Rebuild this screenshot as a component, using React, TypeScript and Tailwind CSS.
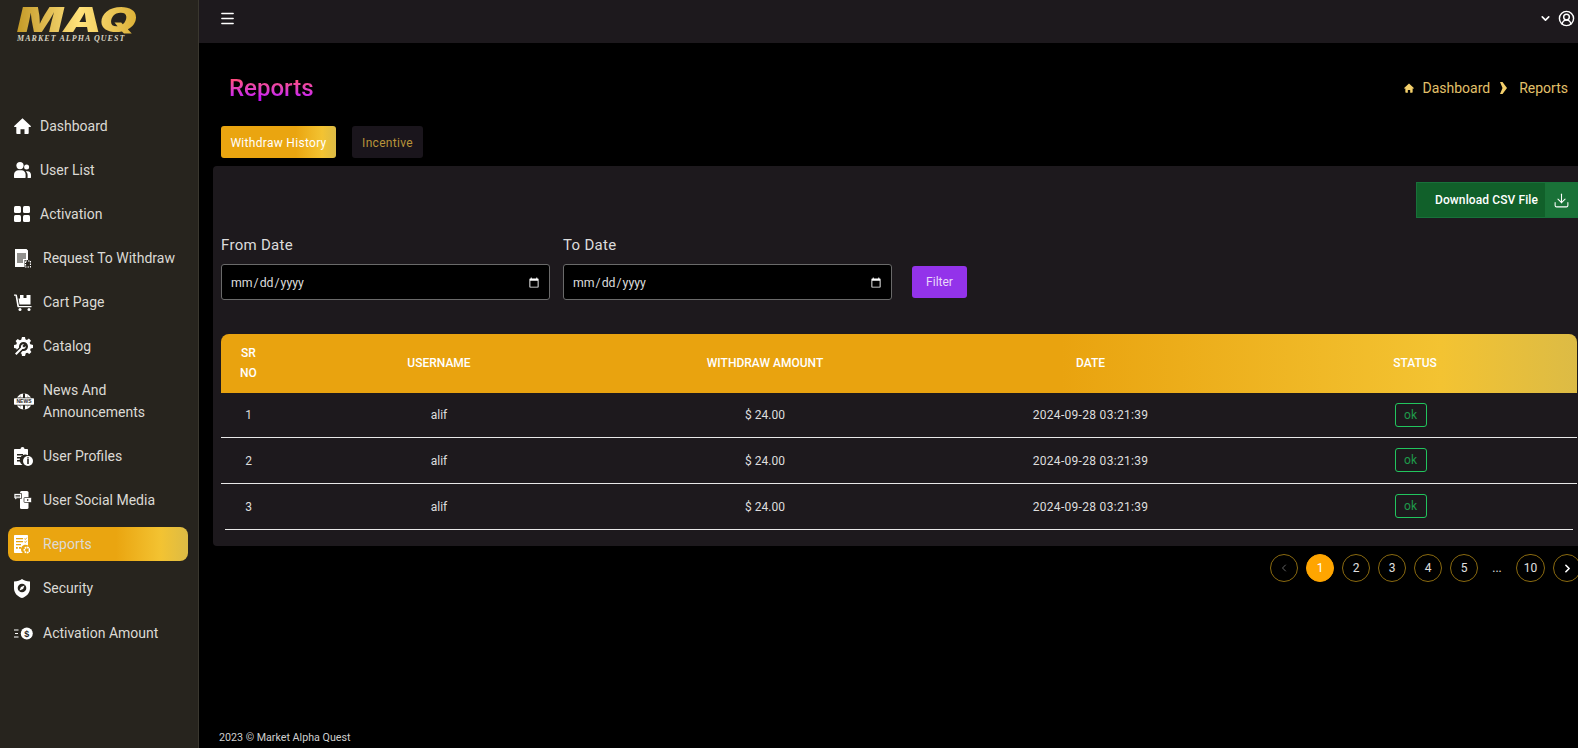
import type { ReactNode } from 'react'
import { ChevronDown, ChevronLeft, ChevronRight, CircleUserRound, Download, Menu } from 'lucide-react'

type IconProps = { className?: string }

const HomeIcon = ({ className = 'w-[17px] h-[16px]' }: IconProps) => (
  <svg viewBox="0 0 17 16" className={className} fill="currentColor">
    <path d="M8.5 0.3 0.2 7.9c-.4.4-.1 1 .4 1h1.700v6.100c0 .5.4 1 1 1h3.200v-4.800h4v4.800h3.200c.6 0 1-.5 1-1V8.900h1.700c.5 0 .8-.6.4-1z" />
  </svg>
)

const UsersIcon = () => (
  <svg viewBox="0 0 17 16" className="w-[17px] h-[16px]" fill="currentColor">
    <circle cx="6" cy="3.600" r="3.600" />
    <path d="M0 15.500v-3c0-2.600 2.200-4.200 4.400-4.200h3.200c2.200 0 4 1.600 4 4.200v3c0 .3-.2.500-.5.500H.5c-.3 0-.5-.2-.5-.5z" />
    <circle cx="12.600" cy="5" r="2.500" />
    <path d="M12.900 16h3.600c.3 0 .5-.2.500-.5v-2.700c0-2-1.500-3.600-3.400-3.600h-1.300c-.3 0-.5.300-.2.500 1 .9 1.500 2.100 1.500 3.500v2.200c0 .2-.1.400-.2.600z" />
  </svg>
)

const GridIcon = () => (
  <svg viewBox="0 0 16 16" className="w-[16px] h-[16px]" fill="currentColor">
    <rect width="7" height="7" rx="1.500" />
    <rect x="9" width="7" height="7" rx="1.500" />
    <rect y="9" width="7" height="7" rx="1.500" />
    <rect x="9" y="9" width="7" height="7" rx="1.500" />
  </svg>
)

const RequestIcon = () => (
  <svg viewBox="0 0 17 19" className="w-[17px] h-[19px]" fill="currentColor">
    <path d="M1 0h11.500L14 1.500V11h-3.500v7H1z" />
    <path d="M3 4.500h9v1H3zM3 6.500h9v1H3zM3 8.500h9v1H3zM3 10.500h6v1H3zM3 12.500h6v1H3z" fill="#27241e" />
    <rect x="11.500" y="12" width="5" height="6" fill="none" stroke="currentColor" strokeWidth="1.200" strokeDasharray="1.500 1" />
  </svg>
)

const CartIcon = () => (
  <svg viewBox="0 0 18 17" className="w-[18px] h-[17px]" fill="currentColor">
    <path d="M0 .6h2.200c.4 0 .7.300.8.600L5 12h12.500v1.200H4c-.3 0-.5-.2-.6-.5L1.500 1.800H0z" />
    <path d="M6 1h10.500v9.500H5.500L4.500 4.500H6z" />
    <path d="M9.500 1h3v3h-3z" fill="#27241e" />
    <circle cx="6" cy="15.400" r="1.500" />
    <circle cx="15" cy="15.400" r="1.500" />
  </svg>
)

const CatalogIcon = () => (
  <svg viewBox="0 0 19 19" className="w-[19px] h-[19px]" fill="currentColor">
    <path d="M8 0h3l.4 2.300 1.500.6 2-1.300 2.100 2.100-1.300 2 .6 1.500L19 8v3l-2.300.4-.6 1.500 1.300 2-2.100 2.100-2-1.300-1.500.6L11 19H8l-.4-2.300-1-.4L8.500 14l1 .1c2.500 0 4.500-2 4.500-4.600s-2-4.500-4.500-4.500S5 7 5 9.500l.1 1L2.800 12.800 2.300 11.400 0 11V8l2.300-.4.600-1.500-1.300-2 2.100-2.100 2 1.300 1.500-.6z" />
    <path d="M1 16.500 7 10.500c-.6-1.800.9-3.700 3-3.300l-1.600 1.700 1.600 1.600 1.700-1.600c.4 2-1.500 3.500-3.300 3L2.500 18z" />
  </svg>
)

const NewsIcon = () => (
  <svg viewBox="0 0 20 17" className="w-[20px] h-[17px]" fill="currentColor">
    <path d="M3 4.500C4.500 2 7 .4 10 .4s5.500 1.600 7 4.100h-2.600a9 9 0 0 0-1.400-2.600 8 8 0 0 1 .9 2.600H11V.8h-2v3.700H6.100A8 8 0 0 1 7 1.900a9 9 0 0 0-1.400 2.600zM3 12.500h2.600A9 9 0 0 0 7 15.100a8 8 0 0 1-.9-2.600H9v3.700h2v-3.700h2.900a8 8 0 0 1-.9 2.600 9 9 0 0 0 1.400-2.600H17c-1.500 2.500-4 4.100-7 4.100s-5.500-1.600-7-4.100z" />
    <rect y="5.300" width="20" height="6.400" rx=".8" />
    <text x="10" y="10.200" textAnchor="middle" fontSize="5" fontWeight="700" fontFamily="Liberation Sans, sans-serif" fill="#27241e">NEWS</text>
  </svg>
)

const ProfilesIcon = () => (
  <svg viewBox="0 0 19 19" className="w-[19px] h-[19px]" fill="currentColor">
    <path d="M6.500 2a2 2 0 0 1 4 0H13c.6 0 1 .4 1 1v5.200a5.500 5.500 0 0 0-5.500 9.800H1c-.6 0-1-.4-1-1V3c0-.6.400-1 1-1z" />
    <path d="M3 7h6v1.500H3zM3 10h4v1.500H3zM3 13h3.500v1.500H3z" fill="#27241e" />
    <circle cx="14" cy="14" r="5" />
    <path d="M13.200 12h1.600v5h-1.600zM13.200 10.300h1.600v1.200h-1.600z" fill="#27241e" />
  </svg>
)

const SocialIcon = () => (
  <svg viewBox="0 0 18 18" className="w-[18px] h-[18px]" fill="currentColor">
    <rect x="6" y="0" width="8.500" height="18" rx="1.500" />
    <path d="M0 2.500h7.500v5H3L1 9V7.500H0z" stroke="#27241e" strokeWidth=".7" />
    <rect x="10" y="6.500" width="7.500" height="5" rx=".8" stroke="#27241e" strokeWidth=".7" />
    <path d="M1.500 4h4.500v.8H1.500zM1.500 5.500h4.500v.8H1.500z" fill="#27241e" />
    <path d="m13 8 2 1-2 1z" fill="#27241e" />
  </svg>
)

const ReportsIcon = () => (
  <svg viewBox="0 0 16 19" className="w-[16px] h-[19px]" fill="currentColor">
    <path d="M1 0h12c.6 0 1 .4 1 1v9.500a4.500 4.500 0 0 0-5 7.500H1c-.6 0-1-.4-1-1V1c0-.6.4-1 1-1z" />
    <path d="M2 3h7v1.200H2zM2 6h7v1.200H2zM2 9h5v1.200H2zM2 12h1.800v1.800H2zM5 12h2v1.800H5z" fill="#e9a510" />
    <path d="m10.300 3.500 1 1 1.500-1.800M10.300 6.500l1 1 1.500-1.800" fill="none" stroke="#e9a510" strokeWidth=".9" />
    <circle cx="13" cy="15" r="2.600" fill="none" stroke="currentColor" strokeWidth="1.700" strokeDasharray="1.800 .6" />
  </svg>
)

const SecurityIcon = () => (
  <svg viewBox="0 0 16 19" className="w-[16px] h-[19px]" fill="currentColor">
    <path d="M8 0c2 1.500 4.500 2.300 8 2.500v6.700C16 14 12.500 17.500 8 19c-4.500-1.500-8-5-8-9.800V2.500C3.500 2.300 6 1.500 8 0z" />
    <circle cx="8" cy="9" r="4.300" fill="#27241e" />
    <path d="m5.500 11.500 1.400-3.500 3.600-1.500-1.400 3.500z" fill="currentColor" />
  </svg>
)

const AmountIcon = () => (
  <svg viewBox="0 0 19 13" className="w-[19px] h-[13px]" fill="currentColor">
    <path d="M0 2.500h4.500v1H0zM1 6h3v1H1zM0 9.500h4.500v1H0z" />
    <circle cx="12.800" cy="6.500" r="6" />
    <text x="12.800" y="9.800" textAnchor="middle" fontSize="9" fontWeight="700" fontFamily="Liberation Sans, sans-serif" fill="#27241e">$</text>
  </svg>
)

const CrumbArrow = () => (
  <svg viewBox="0 0 7 12" className="w-[7px] h-[12px] ml-[10px] mr-[12px] text-[#f3cf6b]" fill="currentColor">
    <path d="M0 0h2.500L7 6l-4.500 6H0l2.500-6z" />
  </svg>
)

type NavItem = { label: ReactNode; icon: ReactNode; narrow?: boolean; active?: boolean }

const navItems: NavItem[] = [
  { label: 'Dashboard', icon: <HomeIcon />, narrow: true },
  { label: 'User List', icon: <UsersIcon />, narrow: true },
  { label: 'Activation', icon: <GridIcon />, narrow: true },
  { label: 'Request To Withdraw', icon: <RequestIcon /> },
  { label: 'Cart Page', icon: <CartIcon /> },
  { label: 'Catalog', icon: <CatalogIcon /> },
  { label: <>News And<br />Announcements</>, icon: <NewsIcon /> },
  { label: 'User Profiles', icon: <ProfilesIcon /> },
  { label: 'User Social Media', icon: <SocialIcon /> },
  { label: 'Reports', icon: <ReportsIcon />, active: true },
  { label: 'Security', icon: <SecurityIcon /> },
  { label: 'Activation Amount', icon: <AmountIcon /> },
]

const rows = [1, 2, 3]

function Sidebar() {
  return (
    <aside className="w-[199px] shrink-0 h-full bg-[#27241e] border-r border-[#3a372f] flex flex-col">
      <div className="h-[109px] pl-[17px] pt-[6px] shrink-0">
        <div className="w-[88px] pr-[4px] origin-left scale-x-[1.42] text-[34px] leading-[28px] font-black italic bg-gradient-to-r from-[#c49a25] via-[#ffe27a] to-[#d9ad2f] bg-clip-text text-transparent [font-family:Inter,sans-serif]">
          MAQ
        </div>
        <div className="text-[8px] leading-[9px] font-bold italic tracking-[1.05px] text-[#d8d2c0] whitespace-nowrap [font-family:'Liberation_Serif',serif]">
          MARKET ALPHA QUEST
        </div>
      </div>
      <nav className="flex flex-col gap-[10px] pl-[8px] pr-[10px]">
        {navItems.map((item, i) => (
          <div
            key={i}
            className={`flex items-center rounded-lg pl-[6px] py-[6px] text-[14px] leading-[22px] text-[#dcdad5] ${
              item.active ? 'bg-[linear-gradient(90deg,#eaa510_0%,#eaa510_60%,#f3c332_85%,#dcbb45_100%)]' : ''
            } ${i === navItems.length - 1 ? 'mt-[1px]' : ''}`}
          >
            <span className={`flex items-center justify-start shrink-0 text-white ${item.narrow ? 'w-[26px]' : 'w-[29px]'}`}>
              {item.icon}
            </span>
            <span>{item.label}</span>
          </div>
        ))}
      </nav>
    </aside>
  )
}

function Topbar() {
  return (
    <header className="h-[43px] shrink-0 bg-[#1d191d] flex items-center justify-between pl-[20px] pr-[3px] pb-[6px]">
      <Menu className="w-[17px] h-[17px] text-white" strokeWidth={2} />
      <div className="flex items-center gap-[6px] text-white">
        <ChevronDown className="w-[13px] h-[13px]" strokeWidth={3} />
        <CircleUserRound className="w-[17px] h-[17px]" strokeWidth={2} />
      </div>
    </header>
  )
}

function DateField({ label }: { label: string }) {
  return (
    <label className="block w-[329px]">
      <span className="block text-[15px] leading-[24px] tracking-[0.3px] text-[#dcdcdc] mb-[7px]">{label}</span>
      <input
        type="date"
        className="block w-full h-[36px] bg-black border border-[#6a6a6a] rounded-[3px] pl-[8px] pr-[7px] pt-[3px] text-[12.3px] text-[#dcdcdc] [color-scheme:dark]"
      />
    </label>
  )
}

function Pagination() {
  const circle = 'w-[28px] h-[28px] rounded-full border border-[#8a6a10] flex items-center justify-center shrink-0'
  return (
    <div className="flex justify-end items-center gap-[8px] mt-[8px] -mr-[3px] text-[12px] text-[#e0e0e0]">
      <span className={`${circle} border-[#3a2d08] text-[#666]`}>
        <ChevronLeft className="w-[12px] h-[12px]" />
      </span>
      <span className={`${circle} bg-[#ffa500] border-[#ffa500] text-white`}>1</span>
      {[2, 3, 4, 5].map(n => (
        <span key={n} className={circle}>{n}</span>
      ))}
      <span className="w-[22px] text-center">...</span>
      <span className={`${circle} w-[29px]`}>10</span>
      <span className={`${circle} text-white`}>
        <ChevronRight className="w-[13px] h-[13px]" strokeWidth={3} />
      </span>
    </div>
  )
}

function ReportTable() {
  return (
    <div className="w-[1356px]">
      <table className="w-full table-fixed border-collapse text-[12px] text-center text-[#dedede]">
        <colgroup>
          <col className="w-[55px]" />
          <col className="w-[326px]" />
          <col className="w-[326px]" />
          <col className="w-[325px]" />
          <col />
        </colgroup>
        <thead>
          <tr className="h-[59px] text-white bg-[linear-gradient(90deg,#e9a30f_0%,#e9a30f_62%,#f3c332_90%,#dcbb45_100%)]">
            <th className="rounded-tl-lg px-[14px] pb-[2px] font-medium leading-[20px]">SR NO</th>
            <th className="pb-[2px] font-medium">USERNAME</th>
            <th className="pb-[2px] font-medium">WITHDRAW AMOUNT</th>
            <th className="pb-[2px] font-medium">DATE</th>
            <th className="rounded-tr-lg pb-[2px] font-medium">STATUS</th>
          </tr>
        </thead>
        <tbody>
          {rows.map(n => {
            const text = n === 1 ? '' : 'pt-[2px]'
            return (
              <tr key={n} className={n === 1 ? 'h-[44px] border-b border-[#e8e8e8]' : n === 2 ? 'h-[46px] border-b border-[#e8e8e8]' : 'h-[46px]'}>
                <td className={text}>{n}</td>
                <td className={text}>alif</td>
                <td className={text}>$ 24.00</td>
                <td className={`tracking-[0.3px] ${text}`}>2024-09-28 03:21:39</td>
                <td>
                  <span className="inline-flex items-center justify-center w-[32px] h-[24px] mr-[9px] border border-[#22c55e] rounded-[3px] text-[#1f9a4a]">
                    ok
                  </span>
                </td>
              </tr>
            )
          })}
        </tbody>
      </table>
      <div className="h-px mx-[4px] bg-[#e8e8e8]" />
    </div>
  )
}

export default function App() {
  return (
    <div className="flex h-screen w-full overflow-hidden bg-black text-white [font-family:Roboto,sans-serif]">
      <Sidebar />
      <div className="flex-1 min-w-0 flex flex-col">
        <Topbar />
        <main className="flex-1 flex flex-col pl-[14px] min-h-0">
          <div className="flex items-center justify-between h-[88px] pl-[16px] pr-[10px] pt-[2px]">
            <h1 className="text-[24px] leading-[32px] font-medium bg-gradient-to-b from-[#ff4a80] from-[25%] to-[#c80cf5] to-[80%] bg-clip-text text-transparent">
              Reports
            </h1>
            <div className="flex items-center text-[14px] text-[#e3c06a]">
              <HomeIcon className="w-[10px] h-[10px] mr-[8px] text-[#f3cf6b]" />
              <span>Dashboard</span>
              <CrumbArrow />
              <span>Reports</span>
            </div>
          </div>
          <div className="flex gap-[16px] pl-[8px] mb-[8px] -mt-[5px] text-[12px] tracking-[0.3px]">
            <button className="h-[32px] w-[115px] pt-[1px] rounded-[3px] text-white bg-[linear-gradient(90deg,#eaa510_0%,#eaa510_65%,#f3c332_88%,#dcbb45_100%)]">
              Withdraw History
            </button>
            <button className="h-[32px] w-[71px] pt-[1px] rounded-[3px] bg-[#1a151c] text-[#b8943a]">Incentive</button>
          </div>
          <section className="bg-[#1d191d] rounded-tl-[4px] rounded-bl-[4px] h-[380px] pl-[8px] pt-[16px]">
            <div className="flex justify-end">
              <button className="flex h-[36px] w-[162px] text-[12px] font-medium tracking-[0.1px] text-white bg-[#11602a] border border-[#18713a]">
                <span className="flex-1 h-full flex items-center justify-end pr-[7px]">Download CSV File</span>
                <span className="w-[32px] h-full bg-[#1a7238] flex items-center justify-center">
                  <Download className="w-[17px] h-[17px]" strokeWidth={1.5} />
                </span>
              </button>
            </div>
            <div className="flex items-end mt-[15px]">
              <DateField label="From Date" />
              <div className="ml-[13px]">
                <DateField label="To Date" />
              </div>
              <button className="ml-[20px] mb-[2px] w-[55px] h-[32px] rounded-[3px] bg-[#9333ea] text-[12px] text-[#e9d8fb]">
                Filter
              </button>
            </div>
            <div className="mt-[34px]">
              <ReportTable />
            </div>
          </section>
          <Pagination />
          <footer className="mt-auto pl-[6px] pb-[3px] text-[10.7px] leading-[14px] text-[#cfcfcf]">
            2023 © Market Alpha Quest
          </footer>
        </main>
      </div>
    </div>
  )
}
